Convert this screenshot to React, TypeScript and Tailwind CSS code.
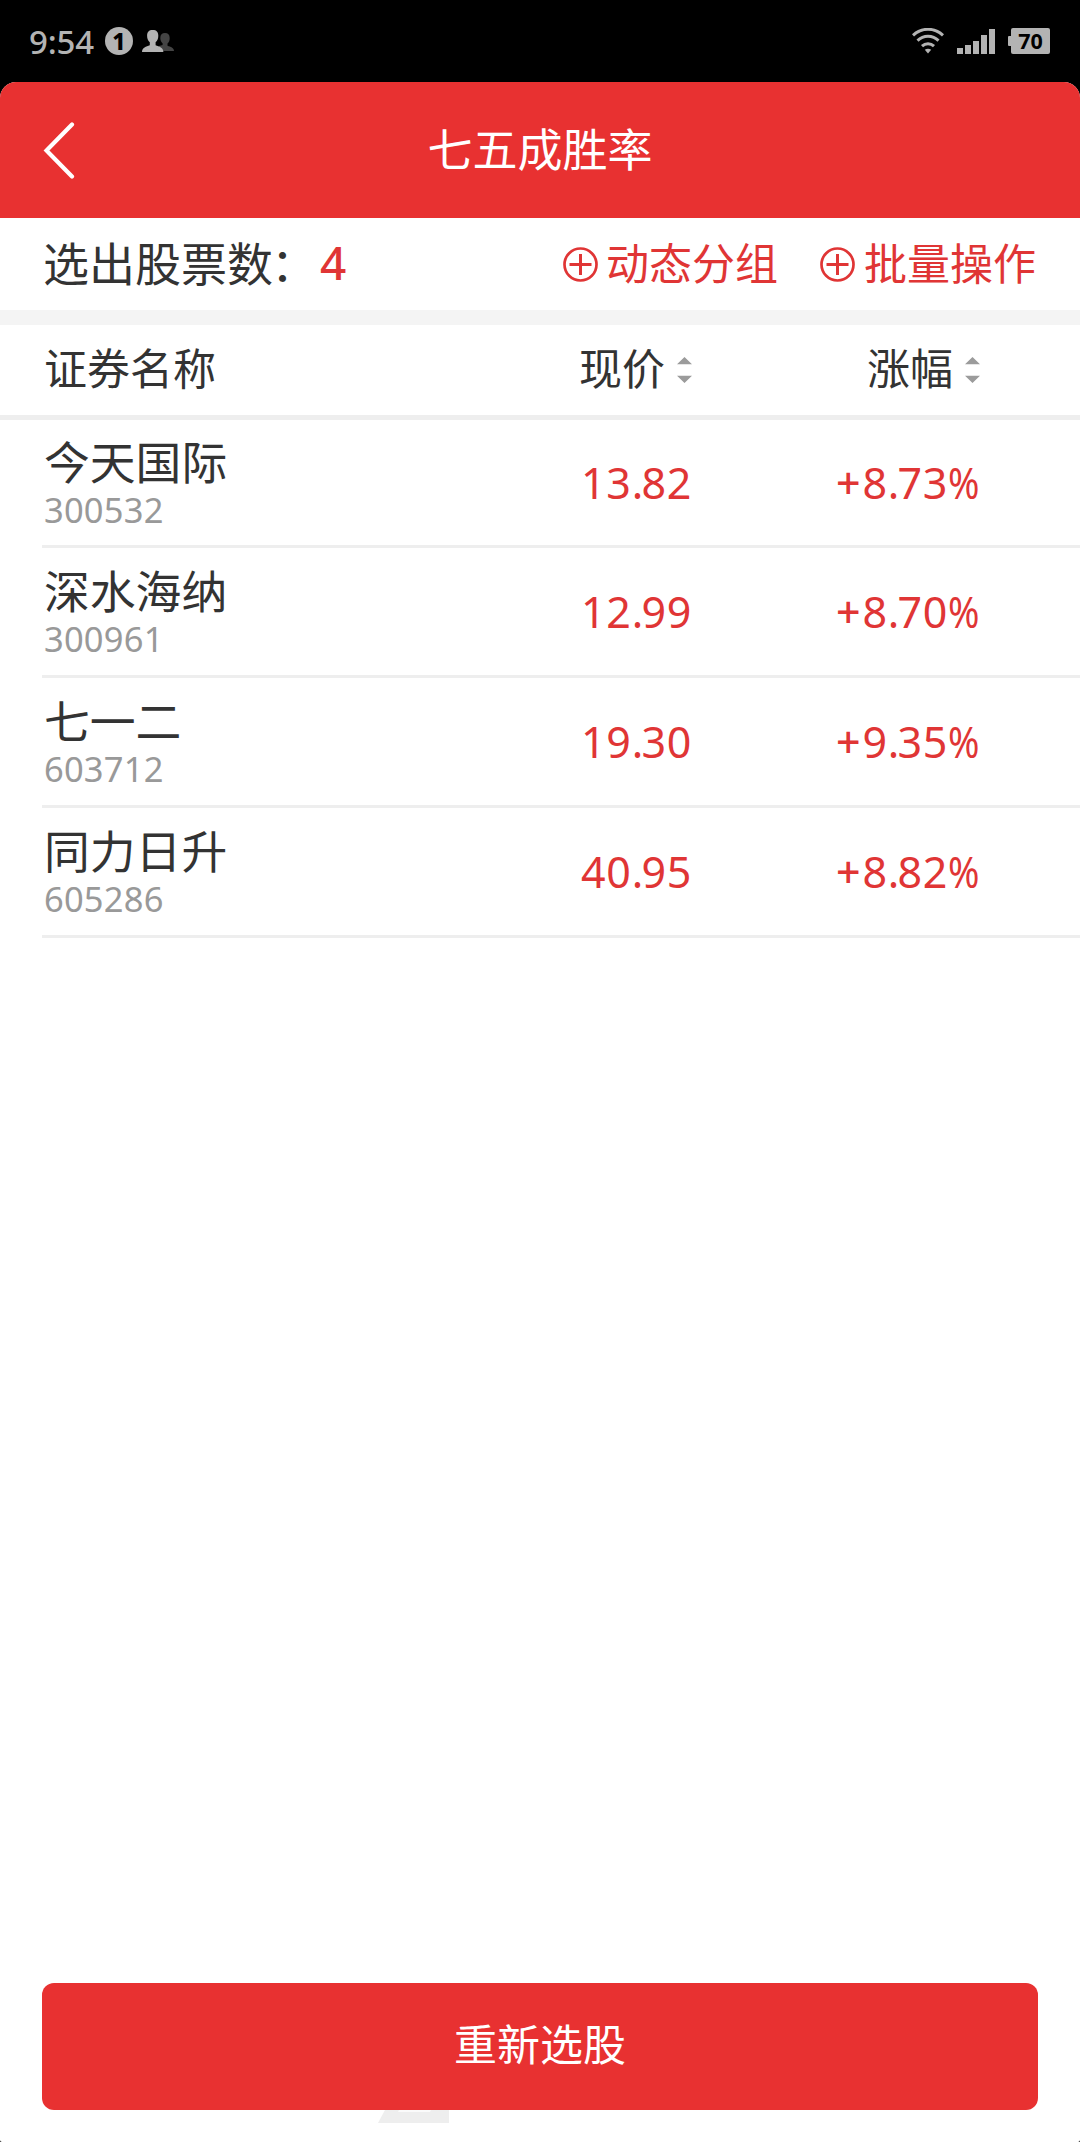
import React from "react";

const stocks = [
  { name: "今天国际", code: "300532", price: "13.82", change: "8.73" },
  { name: "深水海纳", code: "300961", price: "12.99", change: "8.70" },
  { name: "七一二", code: "603712", price: "19.30", change: "9.35" },
  { name: "同力日升", code: "605286", price: "40.95", change: "8.82" },
];

function StatusBar() {
  return (
    <div className="flex h-[82px] shrink-0 items-center justify-between bg-black pr-[30px] pl-[29px] text-[#b3b3b3]">
      <div className="flex h-full items-center">
        <span className="w-[76px] text-[33px] leading-[33px] font-medium tracking-[-0.2px]">9:54</span>
        <span className="flex size-7 items-center justify-center rounded-full bg-[#b3b3b3] text-[23px] leading-7 font-extrabold text-black">
          1
        </span>
        <svg className="ml-[9px] h-[22px] w-8" viewBox="0 0 32 22">
          <path
            fill="#444"
            d="M23 3c3 0 4.700 1.800 4.700 5 0 2.300-.7 4.300-2.200 5.500v2.200c3 1 6.500 2 6.500 5.300H17v-5l3.600-1v-1.700c-1.500-1.200-2.300-3.200-2.300-5.300 0-3.200 1.700-5 4.700-5z"
          />
          <path
            fill="#b3b3b3"
            d="M10.700 0c3.800 0 5.600 2 5.600 5.700 0 2.600-.9 5.200-2.700 6.600v3c3.600 1.300 7.800 2.200 7.800 6.700H0c0-4.500 4.200-5.400 7.800-6.700v-3C6 10.900 5.100 8.300 5.100 5.700 5.100 2 6.900 0 10.700 0z"
          />
        </svg>
      </div>
      <div className="flex items-center">
        <svg className="h-[26px] w-8" viewBox="0 0 32 26" fill="none" stroke="#b3b3b3" strokeWidth="3">
          <path d="M1 7.300C9.500-.7 22.500-.7 31 7.300" />
          <path d="M5.500 12.700c6-5.800 15-5.800 21 0" />
          <path d="M10 18.200c3.500-3.300 8.500-3.300 12 0" />
          <path d="M12.800 21.800c1.900-1.500 4.500-1.500 6.400 0L16 25.500z" fill="#b3b3b3" stroke="none" />
        </svg>
        <div className="ml-[13.500px] flex h-[25px] items-end gap-0.5">
          <i className="h-1.5 w-1.5 bg-[#b3b3b3]" />
          <i className="h-[9px] w-1.5 bg-[#b3b3b3]" />
          <i className="h-[13px] w-1.5 bg-[#b3b3b3]" />
          <i className="h-[19px] w-1.5 bg-[#b3b3b3]" />
          <i className="h-[25px] w-1.5 bg-[#b3b3b3]" />
        </div>
        <div className="ml-[13px] h-2.5 w-[3px] rounded-l-[1px] bg-[#b3b3b3]" />
        <div className="flex h-[26px] w-[39px] items-center justify-center rounded-[2px] bg-[#b3b3b3] text-[21.500px] leading-[26px] font-bold text-black">
          70
        </div>
      </div>
    </div>
  );
}

function PlusCircle() {
  return (
    <svg className="size-[35px]" viewBox="0 0 35 35" fill="none" stroke="#e03535">
      <circle cx="17.500" cy="17.500" r="16" strokeWidth="2.700" />
      <path d="M6.500 17.500h22M17.500 7v21" strokeWidth="3" />
    </svg>
  );
}

function SortIcon() {
  return (
    <svg className="h-[26px] w-[15px]" viewBox="0 0 15 26" fill="#9b9b9b">
      <path d="M0 7.200 7.500 0 15 7.200zM0 18.800h15L7.500 26z" />
    </svg>
  );
}

/** Decimal number set with a tight point. */
function Figure({ value }: { value: string }) {
  const [whole, fraction] = value.split(".");
  return (
    <>
      {whole}
      <span className="tracking-[-1.800px]">.</span>
      {fraction}
    </>
  );
}

export default function App() {
  return (
    <div className="flex h-[2142px] w-[1080px] flex-col overflow-hidden bg-black font-['Noto_Sans','Noto_Sans_CJK_SC',sans-serif] text-[#333]">
      <StatusBar />
      <div className="flex flex-1 flex-col overflow-hidden rounded-t-[16px] rounded-b-[2px] bg-white">
        <header className="grid h-[136px] shrink-0 grid-cols-[1fr_auto_1fr] items-center bg-[#e83131] text-white">
          <svg className="ml-[43px] h-[57px] w-8" viewBox="0 0 32 57" fill="none" stroke="white" strokeWidth="4.200" strokeLinecap="round">
            <path d="M29 2.500 3.500 28.500l25.500 26" />
          </svg>
          <h1 className="pb-px text-[45px] leading-[60px]">七五成胜率</h1>
        </header>

        <section className="flex h-[92px] shrink-0 items-center pr-[44px] pl-[43px]">
          <div className="flex flex-1 items-center pb-[3px] text-[46px] leading-[60px]">
            <span className="w-[277px] whitespace-nowrap">
              选出股票数<span className="-ml-[2px]">：</span>
            </span>
            <span className="pb-px font-medium text-[#e03535]">4</span>
          </div>
          <button className="flex items-center gap-[8px] text-[43px] leading-[60px] text-[#e03535]">
            <PlusCircle />
            <span className="pb-px">动态分组</span>
          </button>
          <button className="ml-[42px] flex items-center gap-[9px] text-[43px] leading-[60px] text-[#e03535]">
            <PlusCircle />
            <span className="pb-px">批量操作</span>
          </button>
        </section>

        <div className="h-[15px] shrink-0 bg-[#f4f4f4]" />

        <div className="flex h-[95px] shrink-0 items-center border-b-[5px] border-[#eee] pr-[100px] pl-[44px] text-[43px] leading-[60px]">
          <span className="flex-1 pb-[3px]">证券名称</span>
          <span className="flex w-[288px] items-center justify-end gap-[12px]">
            <span className="pb-[3px]">现价</span>
            <SortIcon />
          </span>
          <span className="flex w-[288px] items-center justify-end gap-[12px]">
            <span className="pb-[3px]">涨幅</span>
            <SortIcon />
          </span>
        </div>

        <main className="flex flex-1 flex-col pl-[42px]">
          {stocks.map((s, i) => (
            <div
              key={s.code}
              className={
                "flex shrink-0 items-center border-b-[3px] border-[#eee] pr-[100px] " + (i === 0 ? "h-[128px]" : "h-[130px]")
              }
            >
              <div className="flex flex-1 flex-col pt-[4px] pl-[2px]">
                <span className="text-[45.800px] leading-[50px]">{s.name}</span>
                <span className="text-[34.500px] leading-[46px] tracking-[0.2px] text-[#999]">{s.code}</span>
              </div>
              <span className="w-[288px] text-right text-[43px] leading-[60px] tracking-[0.700px] text-[#e03535]">
                <Figure value={s.price} />
              </span>
              <span className="flex w-[288px] justify-end text-[43px] leading-[60px] tracking-[0.700px] text-[#e03535]">
                <span className="mr-px font-medium">+</span>
                <span>
                  <Figure value={s.change} />
                </span>
                <span className="w-[32px] origin-left scale-x-[0.88]">%</span>
              </span>
            </div>
          ))}
        </main>

        <footer className="relative flex shrink-0 flex-col px-[42px] pb-[32px]">
          <svg className="absolute bottom-[19px] left-[378px] h-[13px] w-[71px]" viewBox="0 0 71 13">
            <path d="M7 0h64v13H0z" fill="#eee" />
            <path d="M21 0h32l-1 2H20z" fill="#fafafa" />
          </svg>
          <button className="h-[127px] rounded-[12px] bg-[#e83131] pb-[4px] text-[43px] leading-[60px] text-white">重新选股</button>
        </footer>
      </div>
    </div>
  );
}
